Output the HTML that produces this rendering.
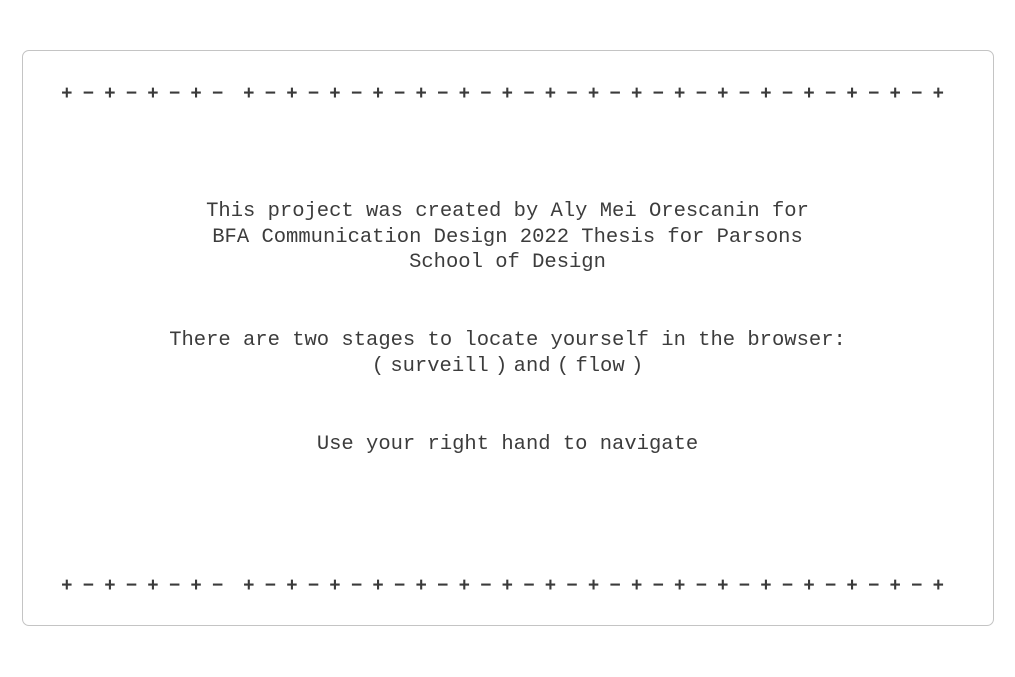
<!DOCTYPE html>
<html><head><meta charset="utf-8"><style>
html,body{margin:0;padding:0;background:#fff;width:1015px;height:677px;overflow:hidden}
.box{position:absolute;left:22px;top:50px;width:970px;height:574px;border:1px solid #c4c4c4;border-radius:7px}
.row{position:absolute;display:flex;font-family:"Liberation Sans",sans-serif;font-weight:bold;font-size:19px;color:#3a3a3a;line-height:20px}
.row span{width:21.55px;text-align:center}
.t{position:absolute;left:0;width:1015px;text-align:center;font-family:"Liberation Mono",monospace;font-size:20.5px;color:#3c3c3c;line-height:25.5px}
</style></head><body>
<div class="box"></div>
<div class="row" style="left:56px;top:84px"><span>+</span><span>−</span><span>+</span><span>−</span><span>+</span><span>−</span><span>+</span><span>−</span></div>
<div class="row" style="left:238px;top:84px"><span>+</span><span>−</span><span>+</span><span>−</span><span>+</span><span>−</span><span>+</span><span>−</span><span>+</span><span>−</span><span>+</span><span>−</span><span>+</span><span>−</span><span>+</span><span>−</span><span>+</span><span>−</span><span>+</span><span>−</span><span>+</span><span>−</span><span>+</span><span>−</span><span>+</span><span>−</span><span>+</span><span>−</span><span>+</span><span>−</span><span>+</span><span>−</span><span>+</span></div>
<div class="row" style="left:56px;top:576px"><span>+</span><span>−</span><span>+</span><span>−</span><span>+</span><span>−</span><span>+</span><span>−</span></div>
<div class="row" style="left:238px;top:576px"><span>+</span><span>−</span><span>+</span><span>−</span><span>+</span><span>−</span><span>+</span><span>−</span><span>+</span><span>−</span><span>+</span><span>−</span><span>+</span><span>−</span><span>+</span><span>−</span><span>+</span><span>−</span><span>+</span><span>−</span><span>+</span><span>−</span><span>+</span><span>−</span><span>+</span><span>−</span><span>+</span><span>−</span><span>+</span><span>−</span><span>+</span><span>−</span><span>+</span></div>
<div class="t" style="top:199px">This project was created by Aly Mei Orescanin for<br>BFA Communication Design 2022 Thesis for Parsons<br>School of Design</div>
<div class="t" style="top:328px">There are two stages to locate yourself in the browser:<br><span style="word-spacing:-6px">( surveill ) and ( flow )</span></div>
<div class="t" style="top:432px">Use your right hand to navigate</div>
</body></html>
